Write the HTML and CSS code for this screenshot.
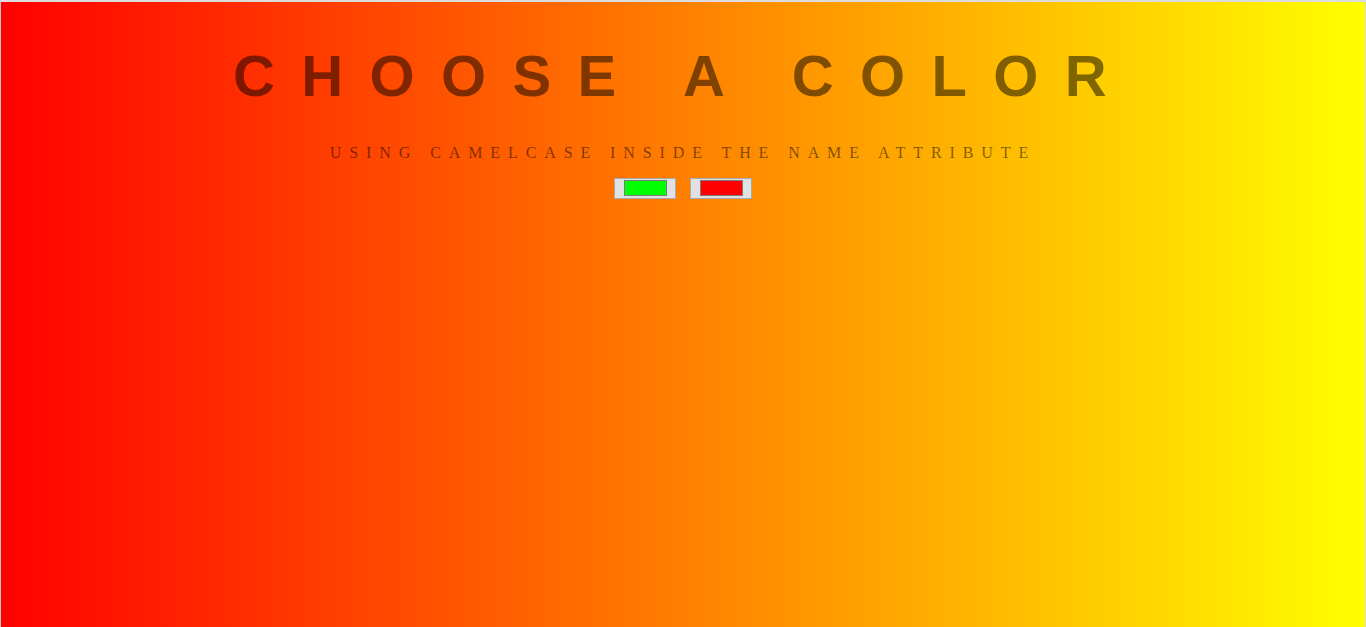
FILE: index.html
```html
<!DOCTYPE html>
<html lang="en">
<head>
<meta charset="utf-8">
<title>Choose a color</title>
<link rel="stylesheet" href="styles.css">
</head>
<body>
<main class="page">
  <h1 class="title">CHOOSE A COLOR</h1>
  <p class="subtitle">USING CAMELCASE INSIDE THE NAME ATTRIBUTE</p>
  <div class="pickers">
    <input class="picker" type="color" name="colorOne" value="#00ff00">
    <input class="picker" type="color" name="colorTwo" value="#ff0000">
  </div>
</main>
</body>
</html>
```
FILE: styles.css
```css
html, body {
  margin: 0;
  padding: 0;
  height: 100%;
}

.page {
  box-sizing: border-box;
  min-height: 100vh;
  border-top: 2px solid #dcdcdc;
  border-left: 1px solid #c8c8c8;
  border-right: 1px solid #d8d8d8;
  background: linear-gradient(to right, #ff0000, #ffff00);
  display: flex;
  flex-direction: column;
  align-items: center;
  padding-top: 40px;
}

.title {
  margin: 0;
  font-family: "Liberation Sans", Arial, sans-serif;
  font-weight: bold;
  font-size: 58px;
  letter-spacing: 26.4px;
  color: rgba(0, 0, 0, 0.5);
  text-align: center;
}

.subtitle {
  margin: 35px 0 0;
  font-family: "Liberation Serif", "Times New Roman", serif;
  font-size: 16px;
  letter-spacing: 7.9px;
  color: rgba(0, 0, 0, 0.5);
  text-align: center;
}

.pickers {
  display: flex;
  gap: 14px;
  margin-top: 16px;
}

.picker {
  -webkit-appearance: none;
  appearance: none;
  box-sizing: border-box;
  width: 62px;
  height: 21px;
  margin: 0;
  padding: 1px 8px 1px 9px;
  border: 1px solid #a9a9a9;
  background: #e1e1e1;
  border-radius: 0;
  cursor: pointer;
}

.picker::-webkit-color-swatch-wrapper {
  padding: 0 0 1px 0;
}

.picker::-webkit-color-swatch {
  border: 1px solid #7a7a7a;
  border-radius: 0;
}
```
